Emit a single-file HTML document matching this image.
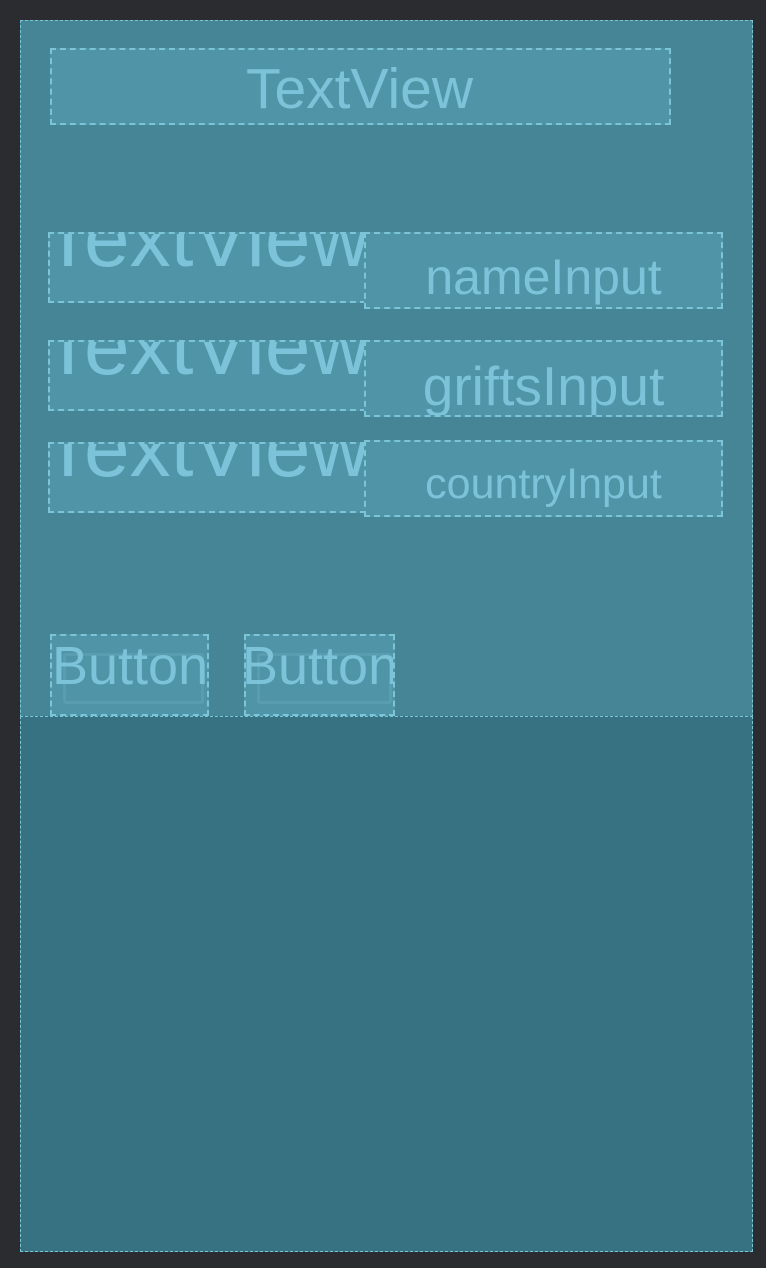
<!DOCTYPE html>
<html><head><style>
body{margin:0;width:766px;height:1268px;background:#2b2c30;position:relative;overflow:hidden;font-family:"Liberation Sans",sans-serif;}
.a{position:absolute;box-sizing:border-box;}
.p{left:20px;top:20px;width:733px;height:1232px;background:#458595;border:1px dashed #7cc5d8;}
.low{left:20px;top:716px;width:733px;height:536px;background:#377282;border:1px dashed #7cc5d8;}
.b{background:#5094a7;border:2px dashed #7cc5d8;overflow:hidden;}
.t{position:absolute;color:#7cc3da;white-space:nowrap;line-height:1;}
.c{left:0;right:0;text-align:center;}
.in{position:absolute;border:3px solid #5a9db0;border-radius:3px;}
</style></head><body>
<div class="a p"></div>
<div class="a low"></div>
<div class="a b" style="left:50px;top:48px;width:621px;height:77px"><div class="t c" style="font-size:57px;top:11px;left:-2px">TextView</div></div>

<div class="a b" style="left:48px;top:232px;width:318px;height:71px"><div class="t" style="font-size:82px;top:-36px;left:-7px">TextView</div></div>
<div class="a b" style="left:48px;top:340px;width:318px;height:71px"><div class="t" style="font-size:82px;top:-36px;left:-7px">TextView</div></div>
<div class="a b" style="left:48px;top:442px;width:318px;height:71px"><div class="t" style="font-size:82px;top:-36px;left:-7px">TextView</div></div>

<div class="a b" style="left:364px;top:232px;width:359px;height:77px"><div class="t c" style="font-size:50px;top:18px">nameInput</div></div>
<div class="a b" style="left:364px;top:340px;width:359px;height:77px"><div class="t c" style="font-size:55px;top:17px">griftsInput</div></div>
<div class="a b" style="left:364px;top:440px;width:359px;height:77px"><div class="t c" style="font-size:43px;top:21px">countryInput</div></div>

<div class="a b" style="left:50px;top:634px;width:159px;height:82px"><div class="in" style="left:11px;top:17px;width:135px;height:45px"></div><div class="t" style="font-size:54px;top:3px;left:0px">Button</div></div>
<div class="a b" style="left:244px;top:634px;width:151px;height:82px"><div class="in" style="left:11px;top:17px;width:129px;height:45px"></div><div class="t" style="font-size:54px;top:3px;left:-4px">Button</div></div>
</body></html>
